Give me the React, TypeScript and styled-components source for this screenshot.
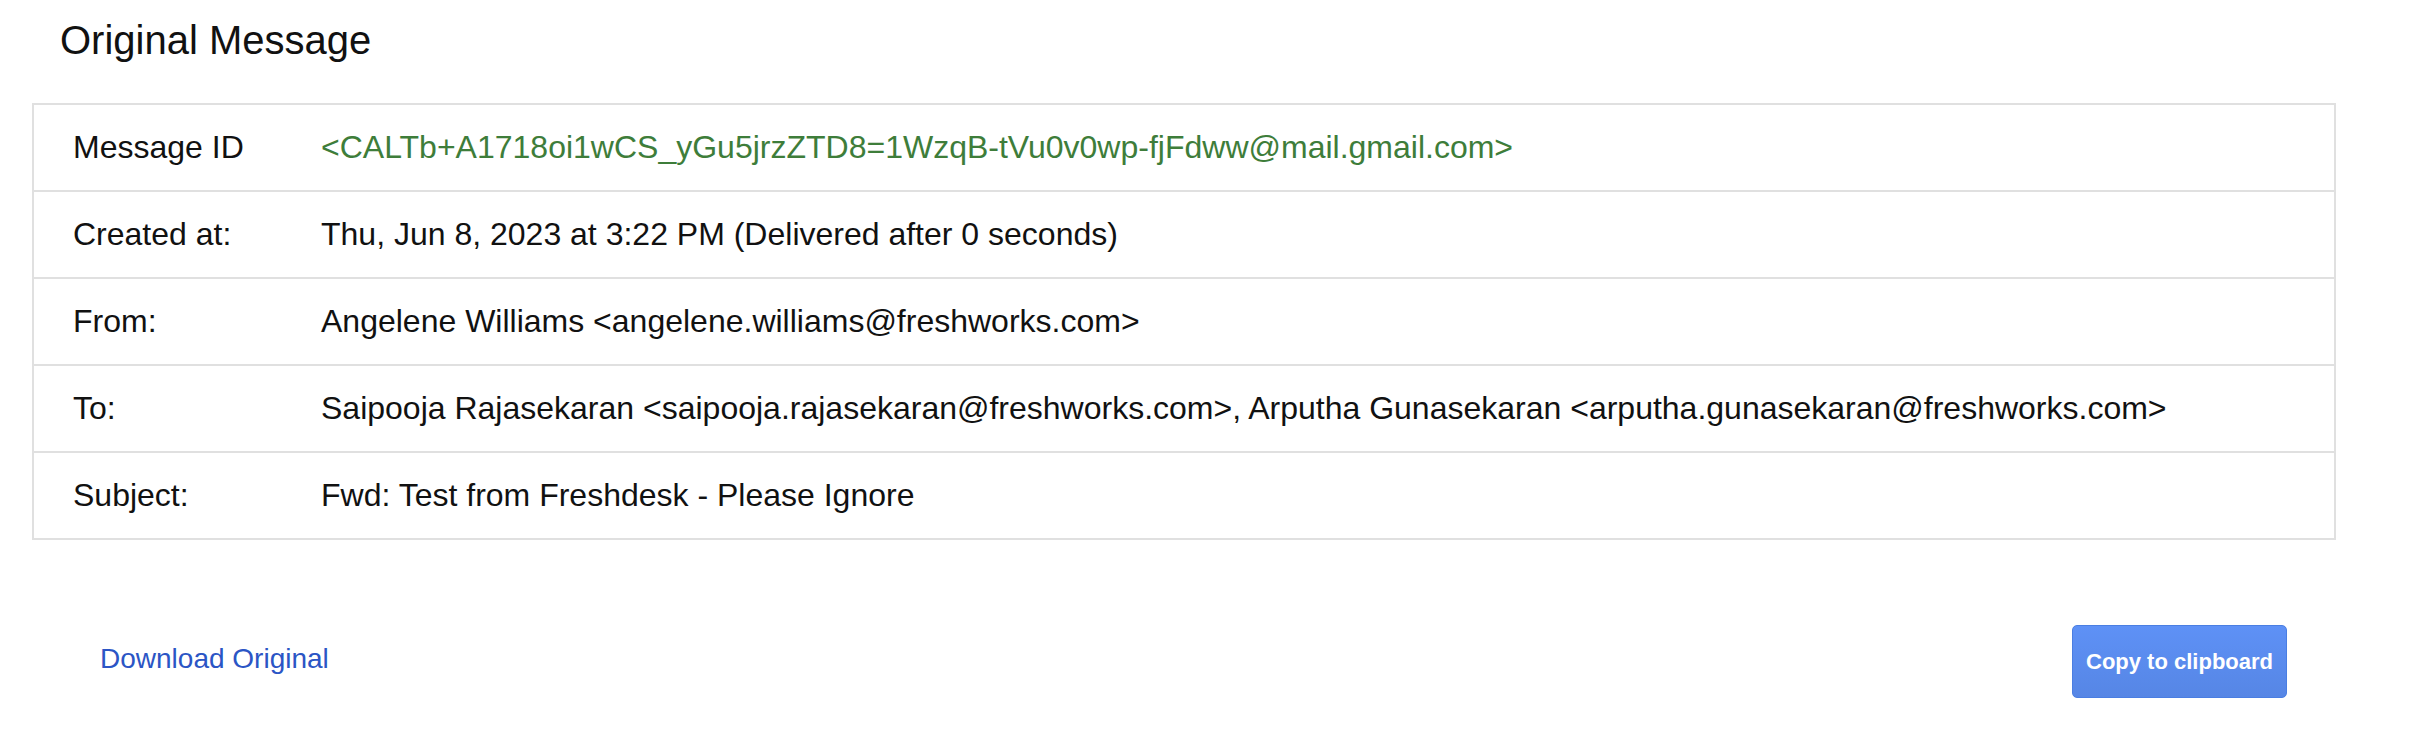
import React from 'react';
import styled, { createGlobalStyle } from 'styled-components';

const COLORS = {
    text: '#111111',
    border: '#e0e0e0',
    green: '#3e7d3a',
    link: '#2b55c5',
    buttonTop: '#5e91f6',
    buttonBottom: '#5686e5',
    buttonBorder: '#4a7ee2',
};

const GlobalStyle = createGlobalStyle`
    html, body {
        margin: 0;
        padding: 0;
        background: #ffffff;
    }
    body {
        font-family: "Liberation Sans", Arial, Helvetica, sans-serif;
        color: ${COLORS.text};
    }
`;

const Page = styled.div`
    width: 2304px;
    padding: 20px 32px 0;
`;

const Title = styled.h1`
    margin: 0 0 43px;
    padding-left: 28px;
    font-size: 40px;
    line-height: 40px;
    font-weight: 400;
`;

const Table = styled.div`
    border: 2px solid ${COLORS.border};
`;

const Row = styled.div`
    display: grid;
    grid-template-columns: 287px 1fr;
    align-items: center;
    height: 85px;
    font-size: 32px;

    & + & {
        border-top: 2px solid ${COLORS.border};
    }
`;

const Label = styled.div`
    padding-left: 39px;
`;

const Value = styled.div<{ $accent?: boolean }>`
    color: ${(p) => (p.$accent ? COLORS.green : COLORS.text)};
    white-space: nowrap;
`;

const Footer = styled.div`
    display: flex;
    align-items: center;
    justify-content: space-between;
    margin-top: 85px;
    padding: 0 49px 0 68px;
`;

const DownloadLink = styled.a`
    margin-bottom: 6px;
    font-size: 28px;
    color: ${COLORS.link};
    text-decoration: none;
    cursor: pointer;
`;

const CopyButton = styled.button`
    box-sizing: border-box;
    height: 73px;
    padding: 0 13px;
    border: 1px solid ${COLORS.buttonBorder};
    border-radius: 5px;
    background: linear-gradient(${COLORS.buttonTop}, ${COLORS.buttonBottom});
    color: #ffffff;
    font-family: "Liberation Sans", Arial, sans-serif;
    font-size: 22px;
    font-weight: 700;
    cursor: pointer;
`;

const FIELDS = [
    { label: 'Message ID', value: '<CALTb+A1718oi1wCS_yGu5jrzZTD8=1WzqB-tVu0v0wp-fjFdww@mail.gmail.com>', accent: true },
    { label: 'Created at:', value: 'Thu, Jun 8, 2023 at 3:22 PM (Delivered after 0 seconds)' },
    { label: 'From:', value: 'Angelene Williams <angelene.williams@freshworks.com>' },
    {
        label: 'To:',
        value: 'Saipooja Rajasekaran <saipooja.rajasekaran@freshworks.com>, Arputha Gunasekaran <arputha.gunasekaran@freshworks.com>',
    },
    { label: 'Subject:', value: 'Fwd: Test from Freshdesk - Please Ignore' },
];

export default function App() {
    return (
        <>
            <GlobalStyle />
            <Page>
                <Title>Original Message</Title>
                <Table>
                    {FIELDS.map((field) => (
                        <Row key={field.label}>
                            <Label>{field.label}</Label>
                            <Value $accent={field.accent}>{field.value}</Value>
                        </Row>
                    ))}
                </Table>
                <Footer>
                    <DownloadLink>Download Original</DownloadLink>
                    <CopyButton>Copy to clipboard</CopyButton>
                </Footer>
            </Page>
        </>
    );
}
